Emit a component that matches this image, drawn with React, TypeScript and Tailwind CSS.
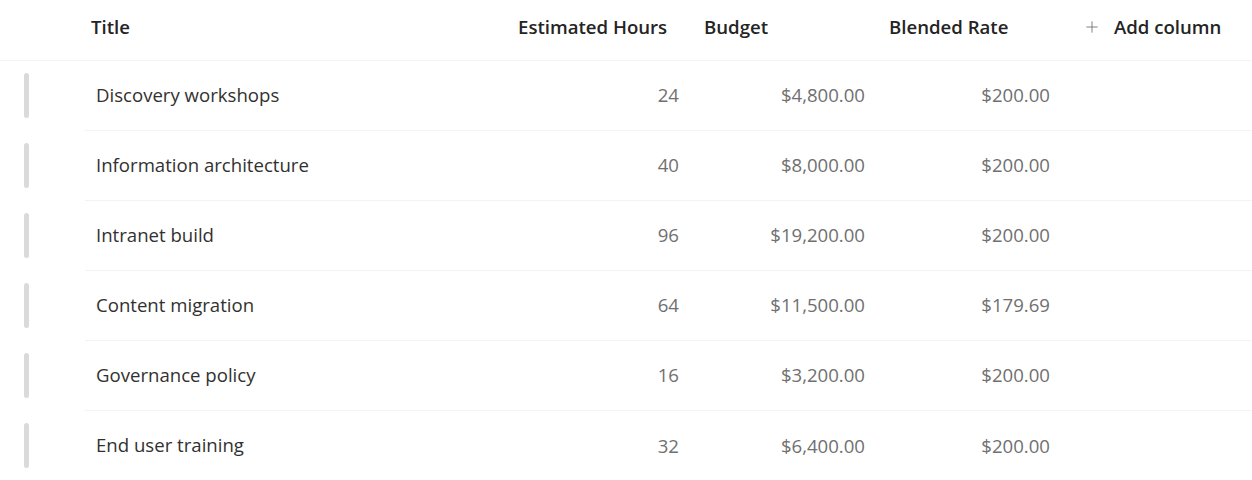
import { Plus } from "lucide-react";

const rows = [
  { title: "Discovery workshops", hours: 24, budget: "$4,800.00", rate: "$200.00" },
  { title: "Information architecture", hours: 40, budget: "$8,000.00", rate: "$200.00" },
  { title: "Intranet build", hours: 96, budget: "$19,200.00", rate: "$200.00" },
  { title: "Content migration", hours: 64, budget: "$11,500.00", rate: "$179.69" },
  { title: "Governance policy", hours: 16, budget: "$3,200.00", rate: "$200.00" },
  { title: "End user training", hours: 32, budget: "$6,400.00", rate: "$200.00" },
];

const cols = "grid grid-cols-[85px_425px_180px_186px_185px_1fr]";

const App = () => {
  return (
    <div
      className="w-[1252px] h-[480px] overflow-hidden bg-white text-[18.6px]"
      style={{ fontFamily: '"Open Sans", "Noto Sans", sans-serif' }}
    >
      <div className={`${cols} h-[61px] items-center border-b border-[#f3f3f3] pb-[6px] font-semibold text-[#242424]`}>
        <div />
        <div className="pl-[6px]">Title</div>
        <div className="pl-[8px]">Estimated Hours</div>
        <div className="pl-[14px]">Budget</div>
        <div className="pl-[13px]">Blended Rate</div>
        <div className="flex items-center pl-[22px]">
          <Plus className="h-[18px] w-[18px] text-[#757575]" strokeWidth={1.2} />
          <span className="ml-[13px]">Add column</span>
        </div>
      </div>

      {rows.map((r, i) => {
        const last = i === rows.length - 1;
        const line = last ? "" : "border-b border-[#f3f3f3]";
        return (
          <div key={r.title} className={`${cols} h-[70px]`}>
            <div className="flex items-center pl-[24px] pb-[2px]">
              <div className="h-[45px] w-[5px] rounded-full bg-[#dadada]" />
            </div>
            <div className="flex items-center border-b border-[#f3f3f3] pl-[11px] pb-[1px] text-[#323130]">
              {r.title}
            </div>
            <div className={`flex items-center justify-end pr-[11px] pb-[1px] text-[#707070] ${line}`}>
              {r.hours}
            </div>
            <div className={`flex items-center justify-end pr-[11px] pb-[1px] text-[#707070] ${line}`}>
              {r.budget}
            </div>
            <div className={`flex items-center justify-end pr-[11px] pb-[1px] text-[#707070] ${line}`}>
              {r.rate}
            </div>
            <div className="border-b border-[#f3f3f3]" />
          </div>
        );
      })}
    </div>
  );
};

export default App;
